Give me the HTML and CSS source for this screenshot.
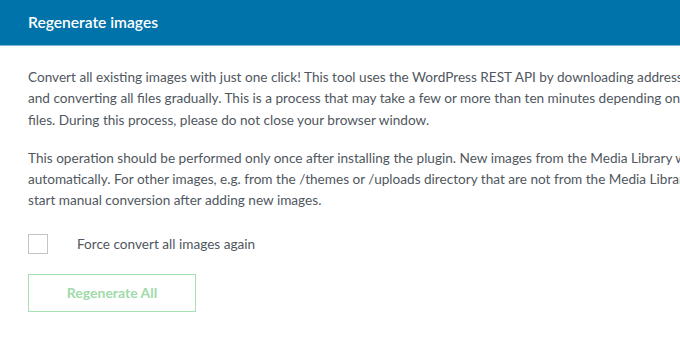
FILE: index.html
```html
<!DOCTYPE html>
<html>
<head>
<meta charset="utf-8">
<link rel="stylesheet" href="styles.css">
</head>
<body>
<div class="panel">
  <div class="panel-header">Regenerate images</div>
  <div class="panel-body">
    <p class="text">
      <span class="line">Convert all existing images with just one click! This tool uses the WordPress REST API by downloading addresses of all images</span>
      <span class="line">and converting all files gradually. This is a process that may take a few or more than ten minutes depending on the number of</span>
      <span class="line">files. During this process, please do not close your browser window.</span>
    </p>
    <p class="text">
      <span class="line">This operation should be performed only once after installing the plugin. New images from the Media Library will be converted</span>
      <span class="line">automatically. For other images, e.g. from the /themes or /uploads directory that are not from the Media Library, you must</span>
      <span class="line">start manual conversion after adding new images.</span>
    </p>
    <label class="option">
      <span class="checkbox"></span>
      <span class="option-label">Force convert all images again</span>
    </label>
    <button class="btn" type="button">Regenerate All</button>
  </div>
</div>
</body>
</html>
```
FILE: styles.css
```css
html, body {
  margin: 0;
  padding: 0;
  overflow: hidden;
  background: #ffffff;
}
body {
  font-family: Lato, "Open Sans", sans-serif;
  color: #50575e;
}
.panel-header {
  height: 46px;
  box-sizing: border-box;
  background: #0073aa;
  border-bottom: 1px solid #7fb6d6;
  color: #ffffff;
  font-size: 15.6px;
  font-weight: 600;
  display: flex;
  align-items: center;
  padding-left: 28px;
  padding-bottom: 1px;
}
.panel-body {
  padding: 21px 28px 0 28px;
}
.text {
  margin: 0 0 17px 0;
  font-size: 13.6px;
  line-height: 21.3px;
}
.line {
  display: block;
  white-space: nowrap;
}
.option {
  display: flex;
  align-items: center;
  gap: 29px;
  margin-top: 22px;
  height: 20px;
}
.checkbox {
  width: 20px;
  height: 20px;
  box-sizing: border-box;
  border: 1px solid #c3c4c7;
  background: #fff;
}
.option-label {
  font-size: 13.6px;
  color: #50575e;
}
.btn {
  margin-top: 20px;
  width: 168px;
  height: 38px;
  background: #fff;
  border: 1px solid #a6e0b0;
  color: #9fdba9;
  font-family: Lato, "Open Sans", sans-serif;
  font-size: 14px;
  font-weight: 700;
  padding: 0;
}
```
